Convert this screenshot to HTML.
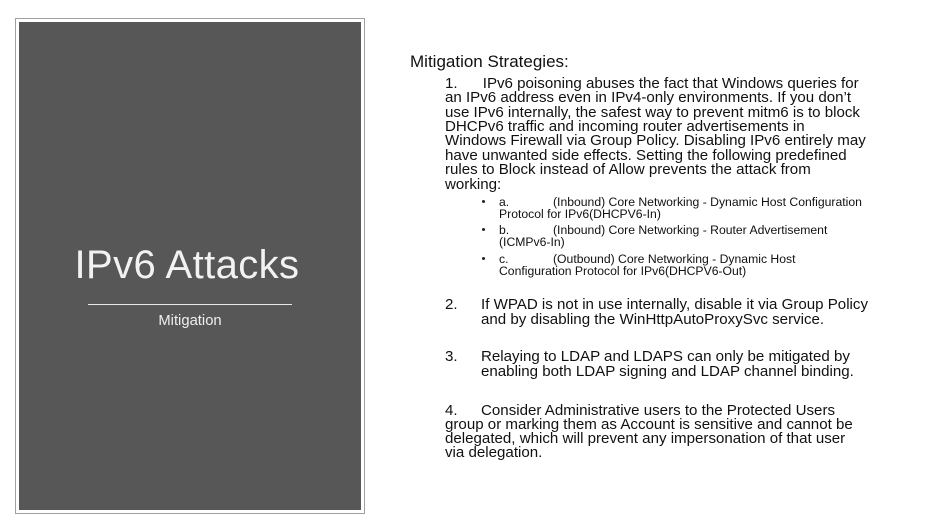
<!DOCTYPE html>
<html><head><meta charset="utf-8"><style>
body{margin:0;width:940px;height:522px;background:#fff;position:relative;overflow:hidden;font-family:"Liberation Sans",sans-serif;color:#111}
.outer{position:absolute;left:15px;top:18px;width:350px;height:496px;border:1px solid #a0a0a0;box-sizing:border-box}
.inner{position:absolute;left:19px;top:22px;width:342px;height:488px;background:#575757}
.t{position:absolute;white-space:nowrap;line-height:1}
.b{font-size:15.1px}
.s{font-size:12.2px}
.dot{position:absolute;width:3px;height:3px;border-radius:50%;background:#222}
</style></head><body>
<div class="outer"></div>
<div class="inner"></div>
<div class="t" style="left:70px;top:245px;font-size:40px;color:#f2f2f2;width:234px;text-align:center;letter-spacing:0.4px">IPv6 Attacks</div>
<div style="position:absolute;left:88px;top:304px;width:204px;height:1px;background:#e8e8e8"></div>
<div class="t" style="left:88px;top:314px;font-size:14.8px;color:#eee;width:204px;text-align:center">Mitigation</div>

<div class="t" style="left:410px;top:53px;font-size:17px">Mitigation Strategies:</div>
<div class="t b" style="left:445px;top:76px">1.&nbsp;&nbsp;&nbsp;&nbsp;&nbsp; IPv6 poisoning abuses the fact that Windows queries for</div>
<div class="t b" style="left:445px;top:90px">an IPv6 address even in IPv4-only environments. If you don’t</div>
<div class="t b" style="left:445px;top:105px">use IPv6 internally, the safest way to prevent mitm6 is to block</div>
<div class="t b" style="left:445px;top:119px">DHCPv6 traffic and incoming router advertisements in</div>
<div class="t b" style="left:445px;top:133px">Windows Firewall via Group Policy. Disabling IPv6 entirely may</div>
<div class="t b" style="left:445px;top:148px">have unwanted side effects. Setting the following predefined</div>
<div class="t b" style="left:445px;top:162px">rules to Block instead of Allow prevents the attack from</div>
<div class="t b" style="left:445px;top:177px">working:</div>

<div class="dot" style="left:482px;top:200px"></div>
<div class="t s" style="left:499px;top:196px">a.</div><div class="t s" style="left:553px;top:196px">(Inbound) Core Networking - Dynamic Host Configuration</div>
<div class="t s" style="left:499px;top:208px">Protocol for IPv6(DHCPV6-In)</div>
<div class="dot" style="left:482px;top:228px"></div>
<div class="t s" style="left:499px;top:224px">b.</div><div class="t s" style="left:553px;top:224px">(Inbound) Core Networking - Router Advertisement</div>
<div class="t s" style="left:499px;top:236px">(ICMPv6-In)</div>
<div class="dot" style="left:482px;top:257px"></div>
<div class="t s" style="left:499px;top:253px">c.</div><div class="t s" style="left:553px;top:253px">(Outbound) Core Networking - Dynamic Host</div>
<div class="t s" style="left:499px;top:265px">Configuration Protocol for IPv6(DHCPV6-Out)</div>

<div class="t b" style="left:445px;top:297px">2.</div><div class="t b" style="left:481px;top:297px">If WPAD is not in use internally, disable it via Group Policy</div>
<div class="t b" style="left:481px;top:312px">and by disabling the WinHttpAutoProxySvc service.</div>

<div class="t b" style="left:445px;top:349px">3.</div><div class="t b" style="left:481px;top:349px">Relaying to LDAP and LDAPS can only be mitigated by</div>
<div class="t b" style="left:481px;top:364px">enabling both LDAP signing and LDAP channel binding.</div>

<div class="t b" style="left:445px;top:403px">4.</div><div class="t b" style="left:481px;top:403px">Consider Administrative users to the Protected Users</div>
<div class="t b" style="left:445px;top:417px">group or marking them as Account is sensitive and cannot be</div>
<div class="t b" style="left:445px;top:431px">delegated, which will prevent any impersonation of that user</div>
<div class="t b" style="left:445px;top:445px">via delegation.</div>
</body></html>
